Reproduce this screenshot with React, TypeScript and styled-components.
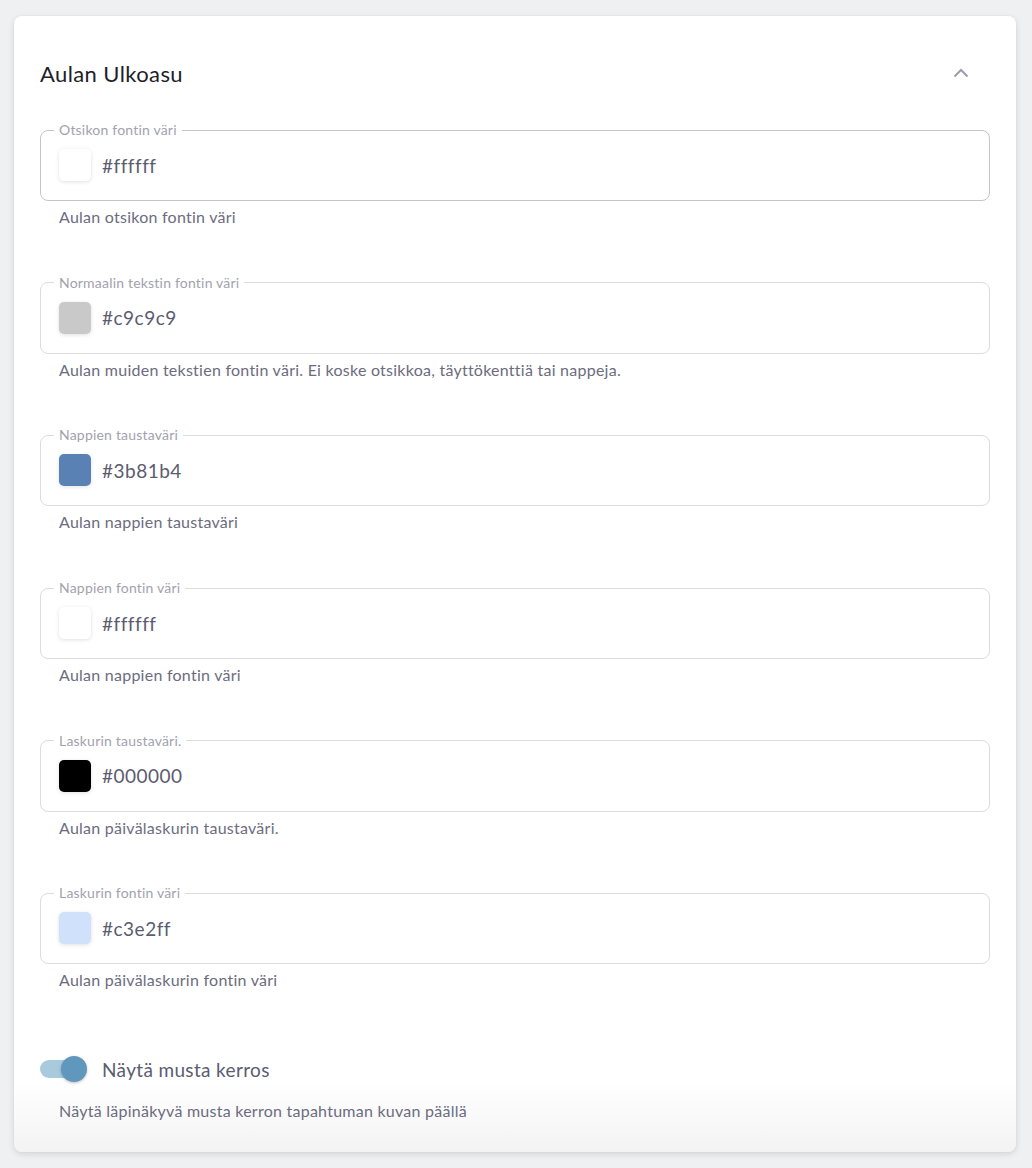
import React from 'react';
import styled, { createGlobalStyle } from 'styled-components';

const GlobalStyle = createGlobalStyle`
  * {
    box-sizing: border-box;
  }
  body {
    margin: 0;
    background-color: #eff0f2;
    font-family: Lato, 'Open Sans', sans-serif;
  }
`;

const Page = styled.div`
  padding: 16px 16px 16px 14px;
`;

const Card = styled.section`
  width: 1002px;
  height: 1136px;
  border-radius: 8px;
  padding: 42px 26px 0 26px;
  background: linear-gradient(to bottom, #ffffff calc(100% - 70px), #f3f3f4 100%);
  box-shadow: 0 2px 6px rgba(0, 0, 0, 0.12), 0 0 2px rgba(0, 0, 0, 0.05);
`;

const Header = styled.header`
  display: flex;
  align-items: center;
  justify-content: space-between;
  height: 30px;
  margin-bottom: 34px;
`;

const Title = styled.h2`
  margin: 0;
  font-weight: 400;
  font-size: 22px;
  letter-spacing: 0.4px;
  color: #1e1e28;
`;

const ChevronButton = styled.button`
  border: none;
  background: none;
  padding: 0;
  margin-right: 20px;
  width: 18px;
  height: 18px;
  display: flex;
  align-items: center;
  justify-content: center;
  cursor: pointer;
`;

const FieldGroup = styled.div`
  margin-bottom: 47.7px;
`;

const Field = styled.fieldset`
  margin: 0;
  border: 1px solid ${(p: { strong?: boolean }) => (p.strong ? '#c4c4cc' : '#dcdce0')};
  border-radius: 8px;
  padding: 0 13px 19px 18px;
  min-width: 0;
`;

const Legend = styled.legend`
  margin-left: -5px;
  padding: 0 5px;
  font-size: 14px;
  line-height: 16px;
  letter-spacing: 0.2px;
  color: #a2a2ae;
`;

const ValueRow = styled.div`
  display: flex;
  align-items: center;
  gap: 11px;
  margin-top: 11px;
`;

const Swatch = styled.div`
  width: 32px;
  height: 32px;
  border-radius: 5px;
  box-shadow: 0 1px 4px rgba(0, 0, 0, 0.12);
`;

const Value = styled.span`
  font-size: 19px;
  letter-spacing: 0.5px;
  color: #5c5c70;
`;

const Helper = styled.p`
  margin: ${(p: { spaced?: boolean }) => (p.spaced ? '18px' : '6px')} 0 0 19px;
  font-size: 16px;
  line-height: 20px;
  letter-spacing: 0.25px;
  color: #6c6c80;
`;

const ToggleRow = styled.label`
  display: flex;
  align-items: center;
  gap: 16px;
  margin-top: 65px;
  height: 28px;
`;

const Track = styled.span`
  position: relative;
  display: inline-block;
  width: 46px;
  height: 18px;
  border-radius: 9px;
  background-color: #a9c9dd;
`;

const Knob = styled.span`
  position: absolute;
  top: -4px;
  right: -1px;
  width: 26px;
  height: 26px;
  border-radius: 50%;
  background-color: #6098bd;
  box-shadow: 0 1px 3px rgba(0, 0, 0, 0.25);
`;

const ToggleLabel = styled.span`
  font-size: 19px;
  letter-spacing: 0.35px;
  color: #5c5c70;
`;

const fields = [
  { label: 'Otsikon fontin väri', value: '#ffffff', swatch: '#ffffff', help: 'Aulan otsikon fontin väri', strong: true },
  {
    label: 'Normaalin tekstin fontin väri',
    value: '#c9c9c9',
    swatch: '#c9c9c9',
    help: 'Aulan muiden tekstien fontin väri. Ei koske otsikkoa, täyttökenttiä tai nappeja.',
  },
  { label: 'Nappien taustaväri', value: '#3b81b4', swatch: '#5a81b3', help: 'Aulan nappien taustaväri' },
  { label: 'Nappien fontin väri', value: '#ffffff', swatch: '#ffffff', help: 'Aulan nappien fontin väri' },
  { label: 'Laskurin taustaväri.', value: '#000000', swatch: '#000000', help: 'Aulan päivälaskurin taustaväri.' },
  { label: 'Laskurin fontin väri', value: '#c3e2ff', swatch: '#cfe1fb', help: 'Aulan päivälaskurin fontin väri' },
];

const App = () => (
  <Page>
    <GlobalStyle />
    <Card>
      <Header>
        <Title>Aulan Ulkoasu</Title>
        <ChevronButton aria-label="Collapse">
          <svg width="16" height="10" viewBox="0 0 16 10">
            <polyline points="1.5,8.5 8,2 14.5,8.5" fill="none" stroke="#9d9dab" strokeWidth="2" />
          </svg>
        </ChevronButton>
      </Header>
      {fields.map((f) => (
        <FieldGroup key={f.label}>
          <Field strong={f.strong}>
            <Legend>{f.label}</Legend>
            <ValueRow>
              <Swatch style={{ backgroundColor: f.swatch }} />
              <Value>{f.value}</Value>
            </ValueRow>
          </Field>
          <Helper>{f.help}</Helper>
        </FieldGroup>
      ))}
      <ToggleRow>
        <Track>
          <Knob />
        </Track>
        <ToggleLabel>Näytä musta kerros</ToggleLabel>
      </ToggleRow>
      <Helper spaced>Näytä läpinäkyvä musta kerron tapahtuman kuvan päällä</Helper>
    </Card>
  </Page>
);

export default App;
